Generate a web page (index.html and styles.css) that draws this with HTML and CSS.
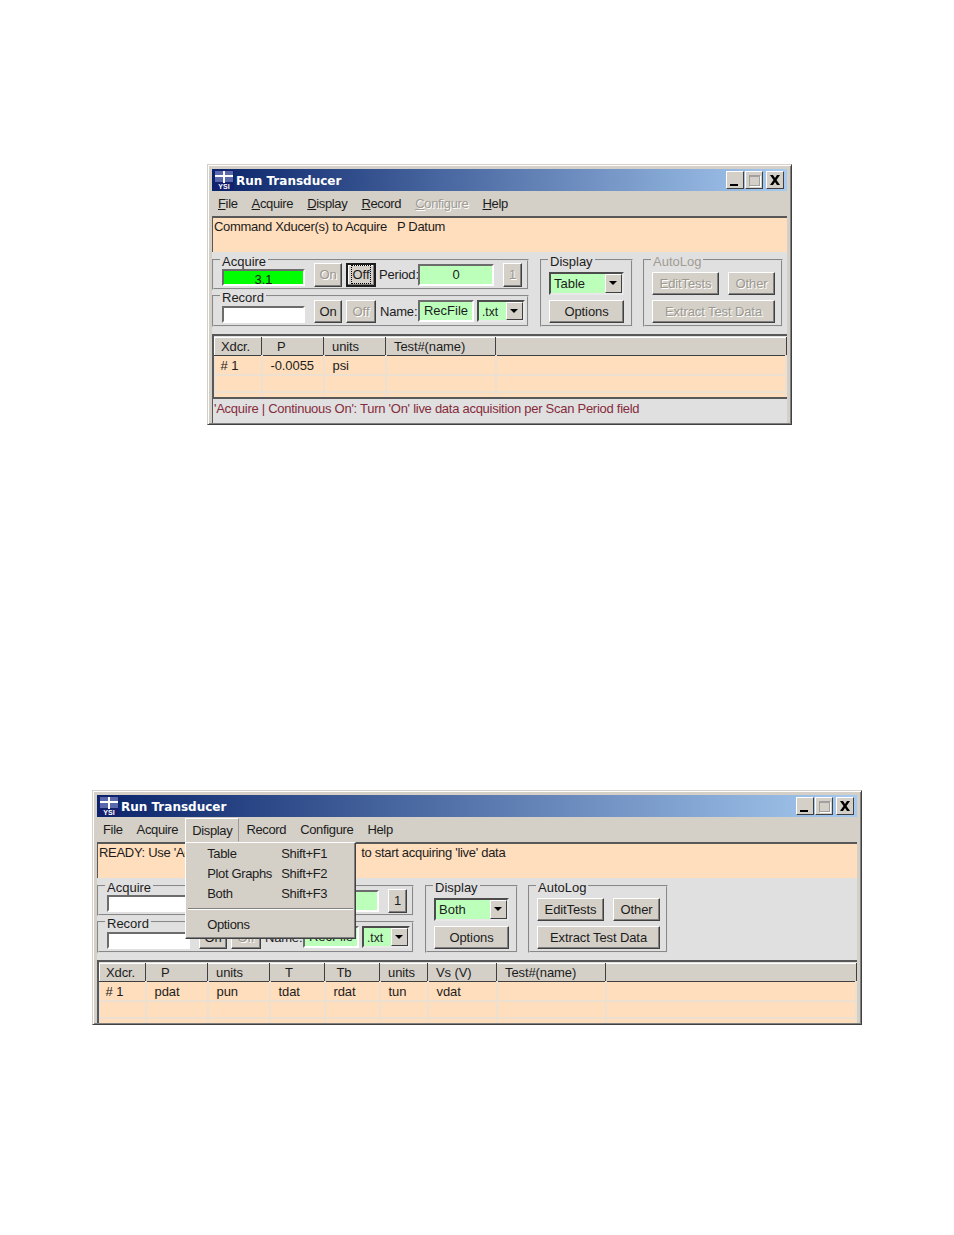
FILE: index.html
```html
<!DOCTYPE html>
<html lang="en">
<head>
    <meta charset="UTF-8">
    <title>Run Transducer</title>
    <link rel="stylesheet" href="styles.css">
</head>
<body>
    <!-- Top window: acquiring -->
    <div class="window window-top">
        <div class="titlebar">
            <svg class="app-icon" viewBox="0 0 20 20" width="20" height="20">
                <rect width="20" height="20" fill="#14206e"/>
                <rect x="1" y="1" width="18" height="11" fill="#5a68ac"/>
                <rect x="1" y="5" width="18" height="2" fill="#fff"/>
                <rect x="9" y="1" width="2" height="12" fill="#fff"/>
                <text x="10" y="18.5" text-anchor="middle" class="app-icon-text">YSI</text>
            </svg>
            <span class="title-text">Run Transducer</span>
            <div class="win-buttons">
                <div class="win-btn"><span class="glyph-min"></span></div>
                <div class="win-btn"><span class="glyph-max"></span></div>
                <div class="win-btn win-close">
                    <svg viewBox="0 0 12 10" width="12" height="10"><path d="M1 0h3l2 3 2-3h3L7.5 5 11 10H8L6 7l-2 3H1l3.500-5z" fill="#000"/></svg>
                </div>
            </div>
        </div>
        <div class="menu">
            <span class="menu-item"><u>F</u>ile</span>
            <span class="menu-item"><u>A</u>cquire</span>
            <span class="menu-item"><u>D</u>isplay</span>
            <span class="menu-item"><u>R</u>ecord</span>
            <span class="menu-item menu-off"><u>C</u>onfigure</span>
            <span class="menu-item"><u>H</u>elp</span>
        </div>
        <div class="message">Command Xducer(s) to Acquire &nbsp; P Datum</div>
        <div class="controls">
            <div class="left-col">
                <div class="group group-acquire">
                    <span class="group-title">Acquire</span>
                    <div class="readout readout-on">3.1</div>
                    <button class="btn btn-on" disabled>On</button>
                    <button class="btn btn-off btn-focus"><span>Off</span></button>
                    <span class="label label-period">Period:</span>
                    <div class="field field-period">0</div>
                    <button class="btn btn-one" disabled>1</button>
                </div>
                <div class="group group-record">
                    <span class="group-title">Record</span>
                    <div class="readout"></div>
                    <button class="btn btn-on">On</button>
                    <button class="btn btn-off" disabled>Off</button>
                    <span class="label label-name">Name:</span>
                    <div class="field field-name">RecFile</div>
                    <div class="combo combo-ext"><span class="combo-text">.txt</span><span class="combo-arrow"></span></div>
                </div>
            </div>
            <div class="group group-display">
                <span class="group-title">Display</span>
                <div class="combo combo-display"><span class="combo-text">Table</span><span class="combo-arrow"></span></div>
                <button class="btn btn-options">Options</button>
            </div>
            <div class="group group-autolog is-off">
                <span class="group-title">AutoLog</span>
                <button class="btn btn-edit" disabled>EditTests</button>
                <button class="btn btn-other" disabled>Other</button>
                <button class="btn btn-extract" disabled>Extract Test Data</button>
            </div>
        </div>
        <div class="table-wrap">
            <table class="data-table">
                <colgroup>
                    <col class="col-47"><col class="col-62"><col class="col-62"><col class="col-110"><col>
                </colgroup>
                <thead>
                    <tr><th>Xdcr.</th><th>&nbsp;&nbsp;P</th><th>units</th><th>Test#(name)</th><th></th></tr>
                </thead>
                <tbody>
                    <tr><td># 1</td><td>-0.0055</td><td>psi</td><td></td><td></td></tr>
                    <tr class="row-short"><td></td><td></td><td></td><td></td><td></td></tr>
                    <tr class="row-cut"><td></td><td></td><td></td><td></td><td></td></tr>
                </tbody>
            </table>
        </div>
        <div class="status">'Acquire | Continuous On': Turn 'On' live data acquisition per Scan Period field</div>
    </div>

    <!-- Bottom window: Display menu open -->
    <div class="window window-bottom">
        <div class="titlebar">
            <svg class="app-icon" viewBox="0 0 20 20" width="20" height="20">
                <rect width="20" height="20" fill="#14206e"/>
                <rect x="1" y="1" width="18" height="11" fill="#5a68ac"/>
                <rect x="1" y="5" width="18" height="2" fill="#fff"/>
                <rect x="9" y="1" width="2" height="12" fill="#fff"/>
                <text x="10" y="18.5" text-anchor="middle" class="app-icon-text">YSI</text>
            </svg>
            <span class="title-text">Run Transducer</span>
            <div class="win-buttons">
                <div class="win-btn"><span class="glyph-min"></span></div>
                <div class="win-btn"><span class="glyph-max"></span></div>
                <div class="win-btn win-close">
                    <svg viewBox="0 0 12 10" width="12" height="10"><path d="M1 0h3l2 3 2-3h3L7.5 5 11 10H8L6 7l-2 3H1l3.500-5z" fill="#000"/></svg>
                </div>
            </div>
        </div>
        <div class="menu">
            <span class="menu-item">File</span>
            <span class="menu-item">Acquire</span>
            <div class="menu-item menu-open">
                Display
                <div class="dropdown">
                    <div class="drop-row"><span>Table</span><span>Shift+F1</span></div>
                    <div class="drop-row"><span>Plot Graphs</span><span>Shift+F2</span></div>
                    <div class="drop-row"><span>Both</span><span>Shift+F3</span></div>
                    <div class="drop-sep"></div>
                    <div class="drop-row"><span>Options</span></div>
                </div>
            </div>
            <span class="menu-item">Record</span>
            <span class="menu-item">Configure</span>
            <span class="menu-item">Help</span>
        </div>
        <div class="message">READY: Use 'Acquire | Continuous On' or 'On' &nbsp;&nbsp;to start acquiring 'live' data</div>
        <div class="controls">
            <div class="left-col">
                <div class="group group-acquire">
                    <span class="group-title">Acquire</span>
                    <div class="readout"></div>
                    <button class="btn btn-on">On</button>
                    <button class="btn btn-off" disabled>Off</button>
                    <span class="label label-period">Period:</span>
                    <div class="field field-period">0</div>
                    <button class="btn btn-one">1</button>
                </div>
                <div class="group group-record">
                    <span class="group-title">Record</span>
                    <div class="readout"></div>
                    <button class="btn btn-on">On</button>
                    <button class="btn btn-off" disabled>Off</button>
                    <span class="label label-name">Name:</span>
                    <div class="field field-name">RecFile</div>
                    <div class="combo combo-ext"><span class="combo-text">.txt</span><span class="combo-arrow"></span></div>
                </div>
            </div>
            <div class="group group-display">
                <span class="group-title">Display</span>
                <div class="combo combo-display"><span class="combo-text">Both</span><span class="combo-arrow"></span></div>
                <button class="btn btn-options">Options</button>
            </div>
            <div class="group group-autolog">
                <span class="group-title">AutoLog</span>
                <button class="btn btn-edit">EditTests</button>
                <button class="btn btn-other">Other</button>
                <button class="btn btn-extract">Extract Test Data</button>
            </div>
        </div>
        <div class="table-wrap">
            <table class="data-table">
                <colgroup>
                    <col class="col-46"><col class="col-62"><col class="col-62"><col class="col-55"><col class="col-55"><col class="col-48"><col class="col-69"><col class="col-109"><col>
                </colgroup>
                <thead>
                    <tr><th>Xdcr.</th><th>&nbsp;&nbsp;P</th><th>units</th><th>&nbsp;&nbsp;T</th><th>&nbsp;Tb</th><th>units</th><th>Vs (V)</th><th>Test#(name)</th><th></th></tr>
                </thead>
                <tbody>
                    <tr><td># 1</td><td>pdat</td><td>pun</td><td>tdat</td><td>rdat</td><td>tun</td><td>vdat</td><td></td><td></td></tr>
                    <tr class="row-short"><td></td><td></td><td></td><td></td><td></td><td></td><td></td><td></td><td></td></tr>
                    <tr class="row-cut"><td></td><td></td><td></td><td></td><td></td><td></td><td></td><td></td><td></td></tr>
                </tbody>
            </table>
        </div>
    </div>
</body>
</html>
```

FILE: styles.css
```css
body {
    margin: 0;
    padding-top: 164px;
    background-color: #fff;
    font-family: "Liberation Sans", Arial, sans-serif;
    font-size: 13px;
    color: #1c1c1c;
}

.window {
    position: relative;
    box-sizing: border-box;
    padding: 4px 4px 1px 4px;
    background-color: #d4d0c8;
    border: 1px solid;
    border-color: #d4d0c8 #404040 #404040 #d4d0c8;
    box-shadow: inset 1px 1px #fff, inset -1px -1px #808080;
}

.window-top {
    width: 585px;
    margin-left: 207px;
}

.window-bottom {
    width: 770px;
    margin-left: 92px;
    margin-top: 365px;
}

/* title bar */
.titlebar {
    display: flex;
    align-items: center;
    height: 22px;
    padding-left: 2px;
    background: linear-gradient(to right, #0a246a, #a6caf0);
}

.app-icon {
    flex: none;
    margin-right: 2px;
}

.app-icon-text {
    font-family: "Liberation Sans", sans-serif;
    font-size: 7px;
    font-weight: bold;
    fill: #fff;
}

.title-text {
    padding-top: 1px;
    font-family: "DejaVu Sans", sans-serif;
    font-size: 12px;
    font-weight: bold;
    color: #fff;
}

.win-buttons {
    display: flex;
    gap: 1px;
    margin-left: auto;
    margin-right: 3px;
}

.win-btn {
    display: flex;
    align-items: center;
    justify-content: center;
    box-sizing: border-box;
    width: 18px;
    height: 18px;
    background-color: #d4d0c8;
    border: 1px solid;
    border-color: #fff #404040 #404040 #fff;
}

.win-close {
    margin-left: 2px;
}

.glyph-min {
    width: 8px;
    height: 2px;
    margin-top: 9px;
    margin-right: 2px;
    background-color: #000;
}

.glyph-max {
    width: 9px;
    height: 8px;
    border: 1px solid #a0a0a0;
    border-top-width: 2px;
    box-shadow: 1px 1px #fff;
}

/* menu bar */
.menu {
    display: flex;
    align-items: center;
    height: 25px;
    margin-left: -1px;
    letter-spacing: -0.35px;
}

.menu-item {
    padding: 0 7px;
    line-height: 23px;
}

.menu-off {
    color: #a09c94;
    text-shadow: 1px 1px #fff;
}

.menu-open {
    position: relative;
    box-sizing: border-box;
    height: 24px;
    line-height: 23px;
    padding: 0 6px;
    border: 1px solid;
    border-color: #fff #9a9a9a #d4d0c8 #fff;
}

.dropdown {
    position: absolute;
    top: 23px;
    left: -1px;
    z-index: 5;
    box-sizing: border-box;
    width: 171px;
    height: 97px;
    padding-top: 1px;
    padding-left: 21px;
    background-color: #d4d0c8;
    border: 1px solid;
    border-color: #fff #404040 #404040 #fff;
    box-shadow: inset -1px -1px #808080;
}

.drop-row {
    display: grid;
    grid-template-columns: 74px 1fr;
    height: 20px;
    line-height: 20px;
}

.drop-sep {
    height: 0;
    margin: 4px 2px 5px -19px;
    border-top: 1px solid #808080;
    border-bottom: 1px solid #fff;
}

/* message strip */
.message {
    box-sizing: border-box;
    height: 36px;
    padding: 1px 0 0 1px;
    line-height: 16px;
    letter-spacing: -0.3px;
    background-color: #ffdebd;
    border-top: 2px solid #585858;
    border-left: 1px solid #585858;
    white-space: nowrap;
    overflow: hidden;
}

/* group boxes */
.controls {
    display: flex;
    gap: 10px;
    height: 82px;
    box-sizing: border-box;
    padding-top: 7px;
    background-color: #e0e0e0;
}

.left-col {
    display: flex;
    flex-direction: column;
    gap: 5px;
    width: 317px;
}

.group {
    position: relative;
    box-sizing: border-box;
    border: 2px groove #dcdcdc;
}

.group-title {
    position: absolute;
    top: -6px;
    left: 6px;
    padding: 0 2px;
    line-height: 14px;
    background-color: #e0e0e0;
}

.is-off .group-title {
    color: #a09c94;
}

.group-acquire,
.group-record {
    display: flex;
    align-items: center;
    padding-left: 8px;
}

.group-acquire {
    height: 31px;
}

.group-record {
    height: 32px;
}

.group-display {
    width: 93px;
    height: 68px;
    margin-left: 1px;
    padding: 11px 7px 0 7px;
}

.group-display .btn-options {
    width: 75px;
    margin-top: 5px;
}

.group-autolog {
    display: flex;
    flex-wrap: wrap;
    align-content: flex-start;
    gap: 5px 9px;
    width: 140px;
    height: 68px;
    padding: 11px 0 0 7px;
}

/* buttons */
.btn {
    box-sizing: border-box;
    height: 23px;
    padding: 0;
    font-family: "Liberation Sans", Arial, sans-serif;
    font-size: 13px;
    letter-spacing: -0.1px;
    color: #1c1c1c;
    background-color: #d4d0c8;
    border: 1px solid;
    border-color: #fff #404040 #404040 #fff;
    box-shadow: inset -1px -1px #808080;
}

.btn:disabled {
    color: #9c9890;
    text-shadow: 1px 1px #fff;
}

.group-acquire .btn {
    height: 24px;
}

.btn-on {
    width: 28px;
    margin-left: 9px;
}

.btn-off {
    width: 30px;
    margin-left: 4px;
}

.btn-focus {
    border: 2px solid #1c1c1c;
    box-shadow: inset -1px -1px #808080, inset 1px 1px #fff;
}

.btn-focus span {
    outline: 1px dotted #000;
    padding: 1px 1px;
}

.btn-one {
    width: 19px;
    margin-left: 9px;
}

.btn-edit {
    width: 67px;
}

.btn-other {
    width: 47px;
}

.btn-extract {
    width: 123px;
}

/* sunken fields */
.readout,
.field,
.combo {
    box-sizing: border-box;
    border: 2px solid;
    border-color: #6c6c6c #fff #fff #6c6c6c;
}

.readout {
    flex: none;
    width: 83px;
    height: 17px;
    line-height: 17px;
    text-align: center;
    background-color: #fff;
    overflow: hidden;
}

.group-acquire .readout {
    margin-top: 5px;
}

.group-record .readout {
    margin-top: 6px;
}

.readout-on {
    background-color: #00ff00;
}

.label {
    white-space: nowrap;
    letter-spacing: -0.2px;
}

.label-period {
    width: 39px;
    margin-left: 3px;
}

.label-name {
    width: 38px;
    margin-left: 4px;
}

.field {
    height: 22px;
    line-height: 17px;
    background-color: #bbffbb;
}

.field-period {
    width: 76px;
    text-align: center;
}

.field-name {
    width: 56px;
    text-align: center;
}

.combo {
    display: flex;
    align-items: stretch;
    height: 23px;
    background-color: #bbffbb;
    border-color: #4c4c4c #e8e8e8 #e8e8e8 #4c4c4c;
}

.combo-ext {
    width: 48px;
    height: 22px;
    margin-left: 3px;
}

.combo-display {
    width: 75px;
}

.combo-text {
    flex: 1;
    padding-left: 3px;
    line-height: 19px;
}

.combo-ext .combo-text {
    padding-top: 1px;
    font-size: 12px;
}

.combo-arrow {
    position: relative;
    flex: none;
    box-sizing: border-box;
    width: 17px;
    background-color: #d4d0c8;
    border: 1px solid;
    border-color: #fff #404040 #404040 #fff;
}

.combo-arrow::after {
    content: "";
    position: absolute;
    top: 6px;
    left: 3px;
    border-style: solid;
    border-width: 4px 4px 0 4px;
    border-color: #000 transparent transparent transparent;
}

/* data table */
.table-wrap {
    box-sizing: border-box;
    height: 63px;
    padding: 1px 0 0 0;
    overflow: hidden;
    background-color: #e0e0e0;
    border-top: 2px solid #585858;
    border-left: 2px solid #585858;
}

.data-table {
    width: 100%;
    table-layout: fixed;
    border-collapse: collapse;
    letter-spacing: -0.1px;
}

.col-46 { width: 46px; }
.col-47 { width: 47px; }
.col-48 { width: 48px; }
.col-55 { width: 55px; }
.col-62 { width: 62px; }
.col-69 { width: 69px; }
.col-109 { width: 109px; }
.col-110 { width: 110px; }

.data-table th {
    box-sizing: border-box;
    height: 18px;
    padding: 0 0 0 8px;
    font-weight: normal;
    text-align: left;
    background-color: #d4d0c8;
    border: 1px solid;
    border-color: #fff #404040 #404040 #fff;
}

.data-table th:first-child {
    padding-left: 6px;
}

.data-table td {
    box-sizing: border-box;
    height: 19px;
    padding: 2px 0 0 8px;
    background-color: #ffdebd;
    border-right: 2px solid #eee0d0;
    border-bottom: 2px solid #eee0d0;
}

.data-table td:first-child {
    padding-left: 6px;
}

.data-table .row-short td {
    height: 17px;
}

.data-table .row-cut td {
    height: 5px;
    padding: 0;
    border-bottom: 0;
}

/* status line */
.status {
    box-sizing: border-box;
    height: 26px;
    padding: 2px 0 0 1px;
    line-height: 16px;
    letter-spacing: -0.27px;
    color: #862c3c;
    background-color: #e0e0e0;
    border-top: 2px solid #585858;
    border-left: 1px solid #585858;
}
```
